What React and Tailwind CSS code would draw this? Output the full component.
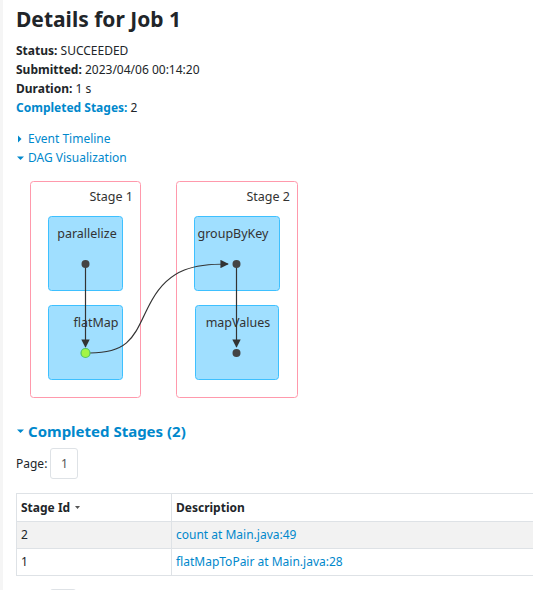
import React from 'react';

const font = { fontFamily: '"Noto Sans", "Open Sans", sans-serif' };

const DagViz = () => (
  <svg width="300" height="230" viewBox="0 0 300 230" className="block">
    <defs>
      <marker id="arrow" viewBox="0 0 10 10" refX="9" refY="5" markerWidth="7" markerHeight="7" orient="auto">
        <path d="M0 0 L10 5 L0 10 z" fill="#333" />
      </marker>
    </defs>
    {/* stage clusters */}
    <rect x="30.5" y="1.5" width="110" height="216" rx="3" fill="#fff" stroke="#ff99ac" />
    <rect x="176.5" y="1.5" width="121" height="216" rx="3" fill="#fff" stroke="#ff99ac" />
    <text x="133" y="21" textAnchor="end" fontSize="12.5" fill="#333" style={font}>Stage 1</text>
    <text x="290" y="21" textAnchor="end" fontSize="12.5" fill="#333" style={font}>Stage 2</text>
    {/* rdd nodes */}
    <rect x="48.5" y="36.5" width="74" height="74" rx="3" fill="#a0dfff" stroke="#3ec0ff" />
    <rect x="48.5" y="125.5" width="74" height="74" rx="3" fill="#a0dfff" stroke="#3ec0ff" />
    <rect x="194.5" y="36.5" width="85" height="74" rx="3" fill="#a0dfff" stroke="#3ec0ff" />
    <rect x="195.5" y="125.5" width="83" height="74" rx="3" fill="#a0dfff" stroke="#3ec0ff" />
    <text x="87" y="58" textAnchor="middle" fontSize="12.5" fill="#333" style={font}>parallelize</text>
    <text x="96" y="147" textAnchor="middle" fontSize="12.5" fill="#333" style={font}>flatMap</text>
    <text x="233" y="58" textAnchor="middle" fontSize="12.5" fill="#333" style={font}>groupByKey</text>
    <text x="238" y="147" textAnchor="middle" fontSize="12.5" fill="#333" style={font}>mapValues</text>
    {/* edges */}
    <line x1="85.5" y1="84" x2="85.5" y2="167" stroke="#333" strokeWidth="1.2" markerEnd="url(#arrow)" />
    <line x1="236.5" y1="84" x2="236.5" y2="167" stroke="#333" strokeWidth="1.2" markerEnd="url(#arrow)" />
    <path d="M90 173 C 135 173, 135 150, 152 120 C 170 88, 195 84, 228 84" fill="none" stroke="#333" strokeWidth="1.2" markerEnd="url(#arrow)" />
    {/* dots */}
    <circle cx="85.5" cy="84" r="4" fill="#444" />
    <circle cx="85.5" cy="173" r="4.5" fill="#a3f545" stroke="#52c366" strokeWidth="1.2" />
    <circle cx="236.5" cy="84" r="4" fill="#444" />
    <circle cx="236.5" cy="173" r="4" fill="#444" />
  </svg>
);

const Caret = ({ open }) =>
  open ? (
    <svg width="12" height="8" viewBox="0 0 12 8" className="shrink-0">
      <path d="M1 2.5 L8 2.5 L4.5 6 z" fill="#0088cc" />
    </svg>
  ) : (
    <svg width="12" height="8" viewBox="0 0 12 8" className="shrink-0">
      <path d="M2 0.5 L5.5 4 L2 7.5 z" fill="#0088cc" />
    </svg>
  );

export default function App() {
  const stages = [
    { id: 2, desc: 'count at Main.java:49' },
    { id: 1, desc: 'flatMapToPair at Main.java:28' },
  ];
  return (
    <div className="w-[533px] h-[590px] overflow-hidden bg-white border-l-[3px] border-[#f5f5f5] text-[#212529]" style={font}>
      <div className="pl-[13px] pt-[2px]">
        <h3 className="text-[21px] font-bold leading-[34px] text-[#212529]">Details for Job 1</h3>
        <ul className="mt-[5px] text-[12px] leading-[19px]">
          <li><strong>Status:</strong> SUCCEEDED</li>
          <li><strong>Submitted:</strong> 2023/04/06 00:14:20</li>
          <li><strong>Duration:</strong> 1 s</li>
          <li><strong className="text-[#0088cc]">Completed Stages:</strong> 2</li>
        </ul>
        <div className="mt-[12px] text-[12px] leading-[19px] text-[#0088cc]">
          <div className="flex items-center"><Caret open={false} /><span>Event Timeline</span></div>
          <div className="flex items-center"><Caret open /><span>DAG Visualization</span></div>
        </div>
        <div className="mt-[13px] -ml-[16px]">
          <DagViz />
        </div>
        <h4 className="mt-[10px] flex items-center text-[15px] font-bold leading-[22px] text-[#0088cc]">
          <Caret open /><span>Completed Stages (2)</span>
        </h4>
        <div className="mt-[6px] flex items-center gap-[3px] text-[12px]">
          <span>Page:</span>
          <span className="w-[28px] h-[31px] flex items-center justify-center border border-[#dee2e6] rounded-[3px] text-[#555]">1</span>
        </div>
        <table className="mt-[14px] w-[560px] border-collapse text-[12px]">
          <thead>
            <tr className="h-[28px]">
              <th className="w-[155px] border border-[#dee2e6] px-[4px] text-left font-bold">
                Stage Id
                <svg width="12" height="8" viewBox="0 0 12 8" className="inline-block ml-[3px] align-middle">
                  <path d="M2 2 L7 2 L4.5 5 z" fill="#555" />
                </svg>
              </th>
              <th className="border border-[#dee2e6] px-[4px] text-left font-bold">Description</th>
            </tr>
          </thead>
          <tbody>
            {stages.map((s, i) => (
              <tr key={s.id} className={`h-[27px] ${i === 0 ? 'bg-[#f2f2f2]' : 'bg-white'}`}>
                <td className="border border-[#dee2e6] px-[4px]">{s.id}</td>
                <td className="border border-[#dee2e6] px-[4px] text-[#0088cc]">{s.desc}</td>
              </tr>
            ))}
          </tbody>
        </table>
        <div className="mt-[13px] ml-[34px] w-[26px] h-[10px] border-t border-x border-[#dee2e6] rounded-t-[3px]" />
      </div>
    </div>
  );
}
